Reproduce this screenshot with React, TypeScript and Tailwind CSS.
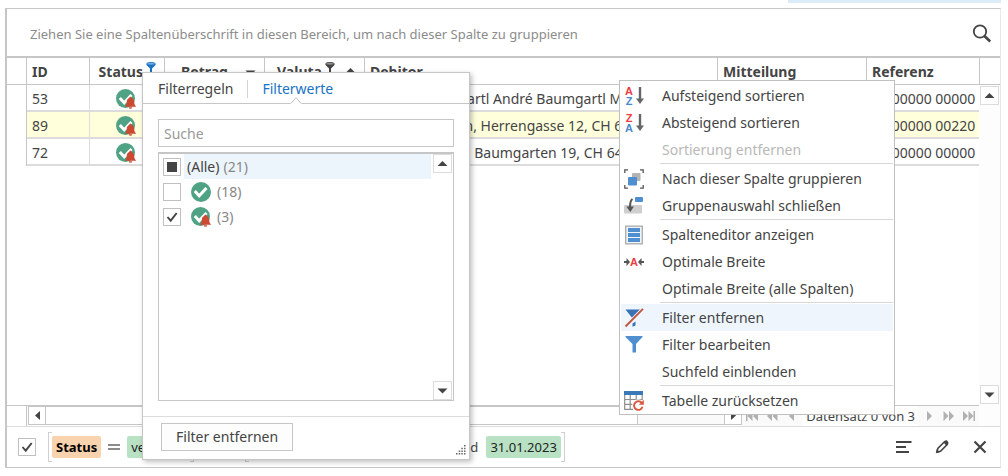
import { useState } from "react";
import type { ReactNode } from "react";
import clsx from "clsx";

type Row = { id: number; debitor: string; referenz: string };

const rows: Row[] = [
  { id: 53, debitor: "Sandra Baumgartl André Baumgartl M", referenz: "00 00000 00000" },
  { id: 89, debitor: "Anna Naumann, Herrengasse 12, CH 6", referenz: "00 00000 00220" },
  { id: 72, debitor: "Markus Lehner, Baumgarten 19, CH 64", referenz: "00 00000 00000" },
];

function StatusIcon({ bell }: { bell?: boolean }) {
  return (
    <svg className="h-5 w-5 shrink-0" viewBox="0 0 20 20" aria-hidden="true">
      <circle cx={bell ? 9.5 : 10} cy={bell ? 9.5 : 10} r={bell ? 9.5 : 10} fill="#4fa283" />
      <path d="M3.800 9l4.400 4.700L15.500 6" fill="none" stroke="#fff" strokeWidth="3" />
      {bell && (
        <path
          d="M14.500 7.800c-.8 0-1.200.5-1.200 1.200-1.700.6-2.500 2-2.500 4 0 2.200-.7 3.400-2.100 4.800h11.600c-1.400-1.400-2.100-2.600-2.100-4.800 0-2-.8-3.400-2.500-4 0-.7-.4-1.200-1.200-1.200zM12.800 18.200a1.700 1.600 0 0 0 3.400 0z"
          fill="#cc4a31"
        />
      )}
    </svg>
  );
}

function PinFilter({ color, top }: { color: string; top: string }) {
  return (
    <svg className="h-3 w-[10px] shrink-0" viewBox="0 0 10 12" aria-hidden="true">
      <path d="M.5 1.500h9v1.500L6 6.500V11H4V6.500L.5 3z" fill={color} />
      <ellipse cx="5" cy="1.800" rx="4.200" ry="1.300" fill={top} stroke={color} strokeWidth=".9" />
    </svg>
  );
}

function Triangle({ dir }: { dir: "up" | "down" | "left" | "right" }) {
  const d = {
    up: "M.5 8L5.500 3l5 5z",
    down: "M.5 3.500h10l-5 5z",
    left: "M8 1v9L3 5.500z",
    right: "M3 1v9l5-4.500z",
  }[dir];
  return (
    <svg className="h-[11px] w-[11px] shrink-0" viewBox="0 0 11 11" aria-hidden="true">
      <path d={d} fill="#444" />
    </svg>
  );
}

function ScrollButton({ dir, label }: { dir: "up" | "down" | "left" | "right"; label: string }) {
  return (
    <button
      type="button"
      aria-label={label}
      className="flex h-[19px] w-[19px] shrink-0 items-center justify-center border border-[#dcdcdc] bg-white"
    >
      <Triangle dir={dir} />
    </button>
  );
}

function NavButton({ label, width, d }: { label: string; width: string; d: string }) {
  return (
    <button type="button" aria-label={label} className={clsx("flex h-5 items-center justify-center", width)}>
      <svg className="h-3 w-3" viewBox="0 0 12 12" aria-hidden="true">
        <path d={d} fill="#b0b0b0" />
      </svg>
    </button>
  );
}

function CheckBox({
  label,
  checked,
  mixed,
  onChange,
}: {
  label: string;
  checked: boolean;
  mixed?: boolean;
  onChange: () => void;
}) {
  return (
    <span className="grid h-[18px] w-[18px] shrink-0 place-items-center">
      <input
        type="checkbox"
        aria-label={label}
        checked={checked}
        onChange={onChange}
        className="col-start-1 row-start-1 h-[18px] w-[18px] appearance-none border border-[#c0c0c0] bg-white"
      />
      {mixed && <span className="pointer-events-none col-start-1 row-start-1 h-[10px] w-[10px] bg-[#444]" />}
      {checked && !mixed && (
        <svg className="pointer-events-none col-start-1 row-start-1 h-3 w-3" viewBox="0 0 12 12" aria-hidden="true">
          <path d="M1.500 6l3.200 3.700L10.700 2" fill="none" stroke="#444" strokeWidth="1.900" />
        </svg>
      )}
    </span>
  );
}

const th = "h-[27px] overflow-hidden border-r border-b border-[#c6c6c6] p-0 pt-[2px] pl-[5px] text-left font-bold whitespace-nowrap";
const td = "h-[27px] overflow-hidden border-r border-b-2 border-[#dcdcdc] p-0 pt-[2px] pl-[5px] whitespace-nowrap";

function DataTable() {
  return (
    <table className="w-full table-fixed border-separate border-spacing-0">
      <colgroup>
        <col className="w-5" />
        <col className="w-[63px]" />
        <col className="w-[75px]" />
        <col className="w-[100px]" />
        <col className="w-[100px]" />
        <col />
        <col className="w-[149px]" />
        <col className="w-[112px]" />
      </colgroup>
      <thead>
        <tr>
          <th className={th} />
          <th className={th}>ID</th>
          <th className={th}>
            <div className="flex h-5 items-start justify-end gap-[3px] pr-2">
              Status
              <PinFilter color="#1a73c4" top="#7fb2e0" />
            </div>
          </th>
          <th className={th}>
            <div className="flex items-center justify-between pr-2 pl-[11px]">
              Betrag
              <Triangle dir="down" />
            </div>
          </th>
          <th className={th}>
            <div className="flex h-5 items-start gap-[3px] pr-2 pl-[7px]">
              Valuta
              <PinFilter color="#444" top="#999" />
              <span className="ml-auto pt-[3px]">
                <Triangle dir="up" />
              </span>
            </div>
          </th>
          <th className={th}>Debitor</th>
          <th className={th}>Mitteilung</th>
          <th className={clsx(th, "border-r-0")}>Referenz</th>
        </tr>
      </thead>
      <tbody>
        {rows.map((row) => (
          <tr key={row.id} className={row.id === 89 ? "bg-[#ffffdc]" : "bg-white"}>
            <td className="border-r border-[#c6c6c6] bg-white p-0" />
            <td className={td}>{row.id}</td>
            <td className={td}>
              <div className="flex justify-center pr-2">
                <StatusIcon bell />
              </div>
            </td>
            <td className={td} />
            <td className={td} />
            <td className={td}>{row.debitor}</td>
            <td className={td} />
            <td className={clsx(td, "border-r-0")}>{row.referenz}</td>
          </tr>
        ))}
      </tbody>
    </table>
  );
}

function Navigator() {
  return (
    <div className="flex h-[21px] border-t border-[#c6c6c6] text-[13px]">
      <div className="w-5 shrink-0 border-r border-[#c6c6c6]" />
      <div className="ml-px flex h-[19px] min-w-0 flex-1 border border-[#c6c6c6] bg-[#fafafa]">
        <button
          type="button"
          aria-label="Nach links"
          className="flex w-[17px] shrink-0 items-center justify-center border-r border-[#c6c6c6] bg-white"
        >
          <Triangle dir="left" />
        </button>
        <div className="w-[592px] shrink border-r border-[#c6c6c6] bg-white" />
        <button
          type="button"
          aria-label="Nach rechts"
          className="ml-auto flex w-[17px] shrink-0 items-center justify-center border-l border-[#c6c6c6] bg-white"
        >
          <Triangle dir="right" />
        </button>
      </div>
      <div className="flex h-5 items-center bg-[#fafafa]">
        <NavButton label="Erster" width="w-5" d="M0 1h1.500v10H0zM6.500 1v10L1.500 6zM12 1v10L7 6z" />
        <NavButton label="Seite zurück" width="w-5" d="M6 1v10L1 6zM11.500 1v10l-5-5z" />
        <NavButton label="Zurück" width="w-5" d="M8 1v10L3 6z" />
        <span className="bg-white px-1">Datensatz 0 von 3</span>
        <NavButton label="Weiter" width="w-5" d="M4 1v10l5-5z" />
        <NavButton label="Seite vor" width="w-5" d="M.5 1v10l5-5zM6 1v10l5-5z" />
        <NavButton label="Letzter" width="w-5" d="M0 1v10l5-5zM5.500 1v10l5-5zM10.500 1H12v10h-1.500z" />
      </div>
    </div>
  );
}

function Bracket({ side }: { side: "left" | "right" }) {
  return (
    <span
      className={clsx(
        "h-[30px] w-1 border-y border-[#d0d0d0]",
        side === "left" ? "border-l" : "border-r"
      )}
    />
  );
}

function Field({ children }: { children: ReactNode }) {
  return (
    <span className="flex h-[22px] items-center rounded-xs bg-[#f9d2ae] px-1 font-bold text-black">{children}</span>
  );
}

function Value({ children }: { children: ReactNode }) {
  return <span className="flex h-[22px] items-center rounded-xs bg-[#b9e2c4] px-1 text-[#222]">{children}</span>;
}

function FilterBar() {
  const [active, setActive] = useState(true);
  return (
    <div className="flex h-[41px] items-center border-t border-[#dcdcdc] pl-[11px] text-[13px]">
      <CheckBox label="Filter aktiv" checked={active} onChange={() => setActive(!active)} />
      <div className="ml-3 flex h-[30px] items-center">
        <Bracket side="left" />
        <Field>Status</Field>
        <svg className="mx-[7px] h-2 w-3" viewBox="0 0 12 8" aria-hidden="true">
          <path d="M0 2h12M0 6h12" stroke="#666" strokeWidth="1.500" />
        </svg>
        <Value>verbucht</Value>
        <Bracket side="right" />
        <span className="w-[51px] text-center">und</span>
        <Bracket side="left" />
        <Field>Valuta</Field>
        <span className="mx-[9px]">zwischen</span>
        <Value>01.01.2023</Value>
        <span className="mx-2">und</span>
        <Value>31.01.2023</Value>
        <Bracket side="right" />
      </div>
      <div className="ml-auto flex items-center gap-[22px] pr-3">
        <button type="button" aria-label="Filterliste">
          <svg className="h-4 w-4" viewBox="0 0 16 16" aria-hidden="true">
            <path d="M0 3h15.500M0 8h10M0 13h13" stroke="#444" strokeWidth="2" />
          </svg>
        </button>
        <button type="button" aria-label="Filter bearbeiten">
          <svg className="h-4 w-4" viewBox="0 0 16 16" aria-hidden="true">
            <path d="M3 13l.8-3.500L10.500 2.800l2.700 2.700-6.700 6.700z" fill="none" stroke="#444" strokeWidth="1.600" />
            <path d="M9.300 3.200L11.300 1.500c.6-.5 1.200-.5 1.800 0l1.100 1.400c.5.6.5 1.200 0 1.800l-1.700 2zM1.800 14.300l1-4 3 3z" fill="#444" />
          </svg>
        </button>
        <button type="button" aria-label="Filter schließen">
          <svg className="h-4 w-4" viewBox="0 0 16 16" aria-hidden="true">
            <path d="M2.500 2.500l11 11M13.500 2.500l-11 11" stroke="#444" strokeWidth="2.200" />
          </svg>
        </button>
      </div>
    </div>
  );
}

function FilterPopup() {
  const [checks, setChecks] = useState([false, true]);
  const toggle = (i: number) => setChecks(checks.map((c, n) => (n === i ? !c : c)));
  const mixed = checks[0] !== checks[1];

  return (
    <div className="absolute top-[72px] left-[142px] w-[328px] border border-[#c6c6c6] bg-white shadow-[2px_2px_5px_rgba(0,0,0,0.25)]">
      <div className="flex h-[31px] items-center border-b border-[#c6c6c6] pt-[2px] pl-[15px]">
        <button type="button">Filterregeln</button>
        <span className="mx-[14px] h-[18px] w-px bg-[#d4d4d4]" />
        <button type="button" className="relative text-[#1a73c4]">
          Filterwerte
          <svg className="absolute -bottom-[5px] left-7 h-2 w-3" viewBox="0 0 12 8" aria-hidden="true">
            <path d="M0 8L6 1l6 7z" fill="#fff" />
            <path d="M1 7.500L6 1.500l5 6" fill="none" stroke="#c0c0c0" />
          </svg>
        </button>
      </div>
      <div className="px-[15px] pt-[15px]">
        <input
          type="text"
          aria-label="Suche"
          placeholder="Suche"
          className="block h-7 w-full border border-[#c6c6c6] px-[5px] outline-none placeholder:text-[#999]"
        />
        <div className="mt-[5px] flex h-[249px] border border-t-2 border-[#c6c6c6]">
          <ul className="flex-1 pl-1">
            <li className="flex h-[25px] items-center">
              <CheckBox
                label="(Alle)"
                checked={checks[0] && checks[1]}
                mixed={mixed}
                onChange={() => setChecks(checks.map(() => mixed || !checks[0]))}
              />
              <span className="ml-[3px] flex h-full flex-1 items-center gap-1 bg-[#edf5fc] pl-[3px]">
                (Alle) <span className="text-[#888]">(21)</span>
              </span>
            </li>
            {[18, 3].map((count, i) => (
              <li key={count} className="flex h-[25px] items-center">
                <CheckBox label={"(" + count + ")"} checked={checks[i]} onChange={() => toggle(i)} />
                <span className="ml-[10px] flex items-center gap-[6px] text-[#888]">
                  <StatusIcon bell={i === 1} />({count})
                </span>
              </li>
            ))}
          </ul>
          <div className="flex w-[22px] flex-col items-center justify-between">
            <ScrollButton dir="up" label="Nach oben" />
            <ScrollButton dir="down" label="Nach unten" />
          </div>
        </div>
      </div>
      <div className="mt-[15px] flex items-end justify-between border-t border-[#dcdcdc] pt-[6px] pr-[3px] pb-1 pl-[18px]">
        <button type="button" className="mb-1 h-7 border border-[#c6c6c6] bg-[#fdfdfd] px-[14px]">
          Filter entfernen
        </button>
        <svg className="h-[10px] w-[10px]" viewBox="0 0 10 10" aria-hidden="true">
          <path
            d="M8 0h1.500v1.500H8zM5.300 2.700h1.500v1.500H5.300zM8 2.700h1.500v1.500H8zM2.700 5.400h1.500v1.500H2.700zM5.300 5.400h1.500v1.500H5.300zM8 5.400h1.500v1.500H8zM0 8h1.500v1.500H0zM2.700 8h1.500v1.500H2.700zM5.300 8h1.500v1.500H5.300zM8 8h1.500v1.500H8z"
            fill="#666"
          />
        </svg>
      </div>
    </div>
  );
}

function SortIcon({ desc }: { desc?: boolean }) {
  return (
    <span className="flex h-5 w-5 items-center gap-[3px] pl-px">
      <span className="flex w-2 flex-col text-center font-['Liberation_Sans',sans-serif] text-[11px] leading-[10px] font-bold">
        <span className="text-[#ef3b3f]">{desc ? "Z" : "A"}</span>
        <span className="text-[#4a8acb]">{desc ? "A" : "Z"}</span>
      </span>
      <svg className="h-5 w-2" viewBox="0 0 8 20" aria-hidden="true">
        <path d="M2.800 1h2.400v11.500H8L4 18l-4-5.500h2.800z" fill="#666" />
      </svg>
    </span>
  );
}

const icons: Record<string, ReactNode> = {
  asc: <SortIcon />,
  desc: <SortIcon desc />,
  group: (
    <svg className="h-5 w-5" viewBox="0 0 20 20" aria-hidden="true">
      <path d="M4 .8H.8V4M16 .8h3.200V4M4 19.200H.8V16M16 19.200h3.200V16" fill="none" stroke="#555" strokeWidth="1.300" />
      <rect x="8" y="4" width="8.500" height="8" rx="1" fill="#b4b4b4" />
      <rect x="4" y="8" width="9" height="8.500" rx="1" fill="#4f8fd0" />
    </svg>
  ),
  close: (
    <svg className="h-5 w-5" viewBox="0 0 20 20" aria-hidden="true">
      <rect x="0" y="9" width="18" height="8.500" rx="1" fill="#cfcfcf" />
      <rect x="11" y="1" width="8" height="5" rx="1" fill="#4f8fd0" />
      <path d="M8.500 3C6.500 4.500 6 7 6 11" fill="none" stroke="#555" strokeWidth="2" />
      <path d="M2.300 10.500h7.600L6.300 16z" fill="#555" />
    </svg>
  ),
  columns: (
    <svg className="h-5 w-5" viewBox="0 0 20 20" aria-hidden="true">
      <rect x="1.700" y="1.200" width="16.600" height="17.600" fill="#eef4fa" stroke="#b0b0b0" strokeWidth="1.400" />
      <path d="M4 5h12M4 10h12M4 15h12" stroke="#4f8fd0" strokeWidth="3.800" />
    </svg>
  ),
  fit: (
    <span className="flex h-5 w-5 items-center justify-between font-['Liberation_Sans',sans-serif] text-[11px] leading-3 font-bold text-[#ef3b3f]">
      <svg className="h-2 w-[6px]" viewBox="0 0 6 8" aria-hidden="true">
        <path d="M0 3h2.500V0L6 4 2.500 8V5H0z" fill="#555" />
      </svg>
      A
      <svg className="h-2 w-[6px]" viewBox="0 0 6 8" aria-hidden="true">
        <path d="M6 3H3.500V0L0 4l3.500 4V5H6z" fill="#555" />
      </svg>
    </span>
  ),
  clear: (
    <svg className="h-5 w-5" viewBox="0 0 20 20" aria-hidden="true">
      <path d="M1.500 1.500h15L11 9v2.500L7.800 9.500zM8.500 15.500l3-2v4l-3 1.300z" fill="#3a72b4" />
      <path d="M1.500 18.500L19 .8" stroke="#eef5fd" strokeWidth="3.600" />
      <path d="M1.500 18.500L19 .8" stroke="#c0563f" strokeWidth="1.900" />
    </svg>
  ),
  edit: (
    <svg className="h-5 w-5" viewBox="0 0 20 20" aria-hidden="true">
      <path d="M1.500 1h17v1L12 9v8.500H8.500V9l-7-7z" fill="#4f8fd0" />
    </svg>
  ),
  reset: (
    <svg className="h-5 w-5" viewBox="0 0 20 20" aria-hidden="true">
      <path d="M.7 4v14.300H9M6.200 4v14M12.200 4v5M18.200 4v5M.7 8.500h17M.7 13.300h9" fill="none" stroke="#8e8e8e" strokeWidth="1.200" />
      <rect x="0" y="0" width="19" height="4" fill="#3a78b8" />
      <path d="M17.800 12a4.300 4.300 0 1 0 .7 3.800" fill="none" stroke="#fff" strokeWidth="4" />
      <path d="M17.800 12a4.300 4.300 0 1 0 .7 3.800" fill="none" stroke="#d9583f" strokeWidth="1.900" />
      <path d="M19.800 8.800v5h-5z" fill="#d9583f" />
    </svg>
  ),
};

type MenuEntry = { label: string; icon?: string; disabled?: boolean; active?: boolean };

const menuGroups: MenuEntry[][] = [
  [
    { label: "Aufsteigend sortieren", icon: "asc" },
    { label: "Absteigend sortieren", icon: "desc" },
    { label: "Sortierung entfernen", disabled: true },
  ],
  [
    { label: "Nach dieser Spalte gruppieren", icon: "group" },
    { label: "Gruppenauswahl schließen", icon: "close" },
  ],
  [
    { label: "Spalteneditor anzeigen", icon: "columns" },
    { label: "Optimale Breite", icon: "fit" },
    { label: "Optimale Breite (alle Spalten)" },
  ],
  [
    { label: "Filter entfernen", icon: "clear", active: true },
    { label: "Filter bearbeiten", icon: "edit" },
    { label: "Suchfeld einblenden" },
  ],
  [{ label: "Tabelle zurücksetzen", icon: "reset" }],
];

function ContextMenu() {
  return (
    <div className="absolute top-20 left-[619px] w-[276px] border border-[#c0c0c0] bg-white px-px pt-px">
      {menuGroups.map((group, g) => (
        <div key={group[0].label}>
          {g > 0 && <div className="ml-[39px] h-[2px] border-t border-[#d8d8d8]" />}
          {group.map((item) => (
            <button
              key={item.label}
              type="button"
              disabled={item.disabled}
              className={clsx(
                "flex h-[27px] w-full items-center pl-[3px] text-left",
                item.disabled && "text-[#b8b8b8]",
                item.active && "bg-[#eef5fd]"
              )}
            >
              <span className="mr-[18px] h-5 w-5 shrink-0">{item.icon && icons[item.icon]}</span>
              {item.label}
            </button>
          ))}
        </div>
      ))}
    </div>
  );
}

export default function App() {
  return (
    <div className="relative flex min-h-screen flex-col bg-white pr-[7px] pb-2 pl-[5px] font-['Noto_Sans','Open_Sans',sans-serif] text-[14px] leading-5 text-[#444]">
      <div className="mb-[5px] h-[3px] w-[213px] self-end bg-[#dcebf8]" />
      <main className="flex flex-1 flex-col border border-l-2 border-[#c6c6c6] border-r-[#e8e8e8]">
        <div className="flex h-[49px] items-center justify-between border-b-2 border-[#c6c6c6] pt-[2px] pr-2 pl-[23px] text-[13px] text-[#8c8c8c]">
          Ziehen Sie eine Spaltenüberschrift in diesen Bereich, um nach dieser Spalte zu gruppieren
          <button type="button" aria-label="Suchen">
            <svg className="h-5 w-5" viewBox="0 0 20 20" aria-hidden="true">
              <circle cx="8" cy="7.500" r="6.200" fill="none" stroke="#444" strokeWidth="1.800" />
              <path d="M12.200 11.700l6 5.800" stroke="#444" strokeWidth="2.600" />
            </svg>
          </button>
        </div>
        <div className="flex flex-1">
          <div className="flex min-w-0 flex-1 flex-col justify-between">
            <DataTable />
            <Navigator />
          </div>
          <div className="flex w-[21px] flex-col">
            <div className="h-[27px] border-b border-l border-[#c6c6c6]" />
            <div className="flex flex-1 flex-col justify-between bg-[#fdfdfd] pt-px pb-[22px] pl-px">
              <ScrollButton dir="up" label="Nach oben" />
              <ScrollButton dir="down" label="Nach unten" />
            </div>
          </div>
        </div>
        <FilterBar />
      </main>
      <FilterPopup />
      <ContextMenu />
    </div>
  );
}
